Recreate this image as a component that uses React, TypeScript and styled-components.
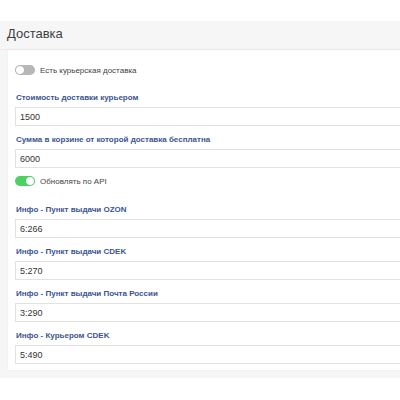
import React, { useState } from 'react';
import styled, { createGlobalStyle } from 'styled-components';

const GlobalStyle = createGlobalStyle`
  html, body {
    margin: 0;
    padding: 0;
    background: #fff;
    overflow: hidden;
    font-family: "Liberation Sans", Arial, sans-serif;
  }
`;

const Page = styled.div`
  padding-top: 21px;
  width: 100%;
  overflow: hidden;
`;

const Panel = styled.div`
  background-color: #f6f6f6;
  padding: 0 0 8px 0;
  width: calc(100% + 40px);
`;

const Header = styled.div`
  height: 24px;
  padding: 0 0 4px 7px;
  display: flex;
  align-items: center;
  font-size: 13px;
  color: #3f3f3f;
  border-bottom: 1px solid #ececec;
`;

const Card = styled.div`
  margin-left: 8px;
  background-color: #fff;
  padding: 15px 0 6px 7px;
  box-shadow: 0 0 2px rgba(0, 0, 0, 0.06);
`;

const SwitchRow = styled.label<{ $mb: number }>`
  display: flex;
  align-items: center;
  gap: 5px;
  height: 10px;
  margin-bottom: ${({ $mb }) => $mb}px;
  font-size: 8px;
  color: #444;
  cursor: pointer;
`;

const Track = styled.span<{ $on: boolean }>`
  position: relative;
  width: 20px;
  height: 10px;
  border-radius: 5px;
  background-color: ${({ $on }) => ($on ? '#4cd263' : '#b7b7b7')};
  flex-shrink: 0;
`;

const Knob = styled.span<{ $on: boolean }>`
  position: absolute;
  top: 1px;
  left: ${({ $on }) => ($on ? '11px' : '1px')};
  width: 8px;
  height: 8px;
  border-radius: 50%;
  background-color: #fff;
  box-shadow: 0 0 1px rgba(0, 0, 0, 0.3);
`;

const Field = styled.div<{ $mb?: number }>`
  margin-bottom: ${({ $mb }) => $mb ?? 8}px;
`;

const Label = styled.div`
  font-size: 8px;
  line-height: 12px;
  font-weight: bold;
  color: #3b5592;
  padding-left: 1px;
  margin-bottom: 3px;
`;

const Input = styled.input`
  display: block;
  box-sizing: border-box;
  width: 100%;
  height: 19px;
  border: 1px solid #e2e2e2;
  padding: 0 4px;
  font-family: "Liberation Sans", Arial, sans-serif;
  font-size: 9px;
  color: #333;
  outline: none;
`;

const Switch: React.FC<{ on: boolean; label: string; mb: number; onToggle: () => void }> = ({ on, label, mb, onToggle }) => (
  <SwitchRow $mb={mb} onClick={onToggle}>
    <Track $on={on}>
      <Knob $on={on} />
    </Track>
    {label}
  </SwitchRow>
);

const infoFields = [
  { label: 'Инфо - Пункт выдачи OZON', value: '6:266' },
  { label: 'Инфо - Пункт выдачи CDEK', value: '5:270' },
  { label: 'Инфо - Пункт выдачи Почта России', value: '3:290' },
  { label: 'Инфо - Курьером CDEK', value: '5:490' },
];

export default function App() {
  const [courier, setCourier] = useState(false);
  const [api, setApi] = useState(true);

  return (
    <>
      <GlobalStyle />
      <Page>
        <Panel>
          <Header>Доставка</Header>
          <Card>
            <Switch on={courier} label="Есть курьерская доставка" mb={17} onToggle={() => setCourier(!courier)} />
            <Field>
              <Label>Стоимость доставки курьером</Label>
              <Input defaultValue="1500" />
            </Field>
            <Field>
              <Label>Сумма в корзине от которой доставка бесплатна</Label>
              <Input defaultValue="6000" />
            </Field>
            <Switch on={api} label="Обновлять по API" mb={18} onToggle={() => setApi(!api)} />
            {infoFields.map((f, i) => (
              <Field key={f.label} $mb={i === infoFields.length - 1 ? 0 : 8}>
                <Label>{f.label}</Label>
                <Input defaultValue={f.value} />
              </Field>
            ))}
          </Card>
        </Panel>
      </Page>
    </>
  );
}
